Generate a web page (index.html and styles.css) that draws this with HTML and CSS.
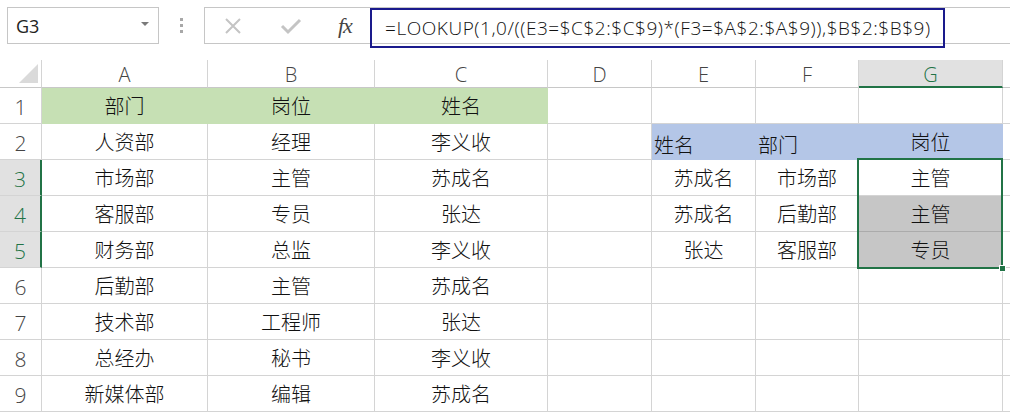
FILE: index.html
```html
<!DOCTYPE html>
<html>
<head>
<meta charset="utf-8">
<link rel="stylesheet" href="styles.css">
</head>
<body>
<div class="toolbar">
  <div class="namebox"><span class="nb-text">G3</span><span class="nb-arrow"></span></div>
  <div class="dots"><i></i><i></i><i></i></div>
  <div class="buttons">
    <svg class="btn-x" width="18" height="18" viewBox="0 0 18 18"><path d="M2 2 L16 16 M16 2 L2 16" stroke="#c4c4c4" stroke-width="2" fill="none"/></svg>
    <svg class="btn-check" width="22" height="18" viewBox="0 0 22 18"><path d="M2 9 L8 15 L20 3" stroke="#c4c4c4" stroke-width="3" fill="none"/></svg>
    <span class="btn-fx">fx</span>
  </div>
  <div class="formula">
    <span class="formula-text">=LOOKUP(1,0/((E3=$C$2:$C$9)*(F3=$A$2:$A$9)),$B$2:$B$9)</span>
  </div>
</div>

<div class="sheet">
  <div class="grid">
    <div class="corner"><span class="tri"></span></div>
    <div class="ch">A</div><div class="ch">B</div><div class="ch">C</div><div class="ch">D</div><div class="ch">E</div><div class="ch">F</div><div class="ch sel">G</div><div class="ch last"></div>

    <div class="rh">1</div>
    <div class="c green">部门</div><div class="c green">岗位</div><div class="c green">姓名</div><div class="c"></div><div class="c"></div><div class="c"></div><div class="c"></div><div class="c last"></div>

    <div class="rh">2</div>
    <div class="c">人资部</div><div class="c">经理</div><div class="c">李义收</div><div class="c"></div><div class="c blue left">姓名</div><div class="c blue left">部门</div><div class="c blue">岗位</div><div class="c last"></div>

    <div class="rh sel">3</div>
    <div class="c">市场部</div><div class="c">主管</div><div class="c">苏成名</div><div class="c"></div><div class="c">苏成名</div><div class="c">市场部</div><div class="c">主管</div><div class="c last"></div>

    <div class="rh sel">4</div>
    <div class="c">客服部</div><div class="c">专员</div><div class="c">张达</div><div class="c"></div><div class="c">苏成名</div><div class="c">后勤部</div><div class="c hl">主管</div><div class="c last"></div>

    <div class="rh sel">5</div>
    <div class="c">财务部</div><div class="c">总监</div><div class="c">李义收</div><div class="c"></div><div class="c">张达</div><div class="c">客服部</div><div class="c hl">专员</div><div class="c last"></div>

    <div class="rh">6</div>
    <div class="c">后勤部</div><div class="c">主管</div><div class="c">苏成名</div><div class="c"></div><div class="c"></div><div class="c"></div><div class="c"></div><div class="c last"></div>

    <div class="rh">7</div>
    <div class="c">技术部</div><div class="c">工程师</div><div class="c">张达</div><div class="c"></div><div class="c"></div><div class="c"></div><div class="c"></div><div class="c last"></div>

    <div class="rh">8</div>
    <div class="c">总经办</div><div class="c">秘书</div><div class="c">李义收</div><div class="c"></div><div class="c"></div><div class="c"></div><div class="c"></div><div class="c last"></div>

    <div class="rh">9</div>
    <div class="c">新媒体部</div><div class="c">编辑</div><div class="c">苏成名</div><div class="c"></div><div class="c"></div><div class="c"></div><div class="c"></div><div class="c last"></div>
  </div>
  <div class="selection"><span class="handle"></span></div>
</div>
</body>
</html>
```

FILE: styles.css
```css
* { box-sizing: border-box; }
html, body { margin: 0; padding: 0; background: #fff; }
body {
  width: 1010px;
  height: 415px;
  overflow: hidden;
  font-family: "Noto Sans CJK SC", "Liberation Sans", sans-serif;
}

.toolbar {
  display: flex;
  align-items: flex-start;
  height: 60px;
  padding-top: 7px;
}
.namebox {
  margin-left: 7px;
  width: 152px;
  height: 37px;
  border: 1px solid #c6c6c6;
  display: flex;
  align-items: center;
  justify-content: space-between;
  padding: 0 9px 0 8px;
}
.nb-text {
  font-family: "Open Sans", "Liberation Sans", sans-serif;
  font-size: 18px;
  color: #222;
}
.nb-arrow {
  width: 0; height: 0;
  border-left: 4px solid transparent;
  border-right: 4px solid transparent;
  border-top: 4px solid #7a7a7a;
  margin-top: -4px;
}
.dots {
  width: 45px;
  height: 37px;
  display: flex;
  flex-direction: column;
  align-items: center;
  justify-content: center;
  gap: 3px;
}
.dots i {
  display: block;
  width: 3px; height: 3px;
  background: #a8a8a8;
}
.buttons {
  width: 166px;
  height: 37px;
  border: 1px solid #c6c6c6;
  border-right: none;
  display: flex;
  align-items: center;
  padding-left: 19px;
}
.btn-x { margin-right: 38px; }
.btn-check { margin-right: 36px; }
.btn-fx {
  font-family: "Liberation Serif", serif;
  font-style: italic;
  font-size: 22px;
  color: #444;
  letter-spacing: -1px;
}
.formula {
  flex: 1;
  height: 37px;
  border-top: 1px solid #c6c6c6;
  border-bottom: 1px solid #c6c6c6;
  position: relative;
}
.formula-text {
  position: absolute;
  left: 0;
  top: 0;
  width: 575px;
  height: 40px;
  border: 2px solid #1a1a8c;
  padding: 5px 0 0 13px;
  font-family: "Open Sans", "Liberation Sans", sans-serif;
  font-size: 19px;
  font-weight: 300;
  color: #111;
  white-space: nowrap;
  letter-spacing: 0.55px;
}

.sheet {
  position: relative;
}
.grid {
  display: grid;
  grid-template-columns: 42px 166px 167px 173px 104px 104px 103px 144px 7px;
  grid-template-rows: 28px repeat(9, 36px);
}
.corner {
  border-right: 1px solid #d4d4d4;
  border-bottom: 1px solid #c8c8c8;
  position: relative;
}
.tri {
  position: absolute;
  right: 3px;
  bottom: 4px;
  width: 0; height: 0;
  border-left: 19px solid transparent;
  border-bottom: 19px solid #dadada;
}
.ch {
  border-right: 1px solid #d4d4d4;
  border-bottom: 1px solid #c8c8c8;
  display: flex;
  align-items: center;
  justify-content: center;
  font-family: "Open Sans", "Liberation Sans", sans-serif;
  font-weight: 300;
  font-size: 20px;
  color: #444;
  padding-top: 2px;
}
.ch.sel {
  background: #e1e1e1;
  color: #217346;
  border-bottom: 2px solid #217346;
}
.ch.last, .c.last { border-right: none; }
.rh {
  border-right: 1px solid #d4d4d4;
  border-bottom: 1px solid #d4d4d4;
  display: flex;
  align-items: center;
  justify-content: center;
  font-family: "Open Sans", "Liberation Sans", sans-serif;
  font-weight: 300;
  font-size: 21px;
  color: #444;
  padding-top: 3px;
}
.rh.sel {
  background: #e1e1e1;
  color: #217346;
  border-right: 2px solid #217346;
}
.c {
  border-right: 1px solid #d4d4d4;
  border-bottom: 1px solid #d4d4d4;
  display: flex;
  align-items: center;
  justify-content: center;
  font-size: 20px;
  font-weight: 300;
  color: #111;
  white-space: nowrap;
}
.c.green { background: #c6e0b4; border-right-color: #c6e0b4; border-bottom-color: #c6e0b4; }
.c.blue { background: #b4c6e7; border-right-color: #b4c6e7; border-bottom-color: #b4c6e7; }
.c.left { justify-content: flex-start; align-items: flex-end; padding-left: 2px; padding-bottom: 0; }
.c.hl { background: #c6c6c6; border-right-color: #c6c6c6; border-bottom-color: #ababab; }

.selection {
  position: absolute;
  left: 857px;
  top: 98px;
  width: 146px;
  height: 111px;
  border: 2px solid #217346;
  pointer-events: none;
}
.handle {
  position: absolute;
  right: -5px;
  bottom: -5px;
  width: 7px;
  height: 7px;
  background: #217346;
  border: 1px solid #fff;
}
```
